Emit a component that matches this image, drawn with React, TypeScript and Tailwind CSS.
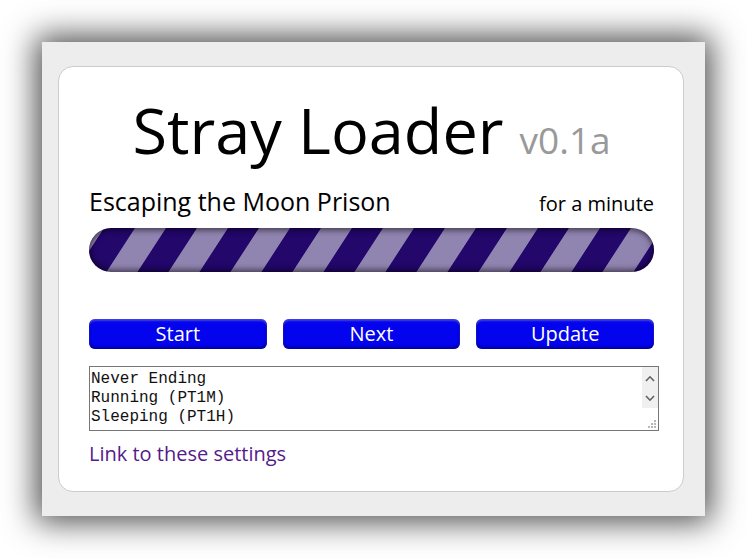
import React from "react";

const ChevronUp = () => (
  <svg width="10" height="7" viewBox="0 0 10 7" fill="none">
    <path d="M1 6L5 1.8L9 6" stroke="#606060" strokeWidth="1.6" />
  </svg>
);

const ChevronDown = () => (
  <svg width="10" height="7" viewBox="0 0 10 7" fill="none">
    <path d="M1 1L5 5.2L9 1" stroke="#606060" strokeWidth="1.6" />
  </svg>
);

const Grip = () => (
  <svg width="9" height="9" viewBox="0 0 9 9" fill="#b8b8b8">
    <rect x="6" y="0" width="2" height="2" />
    <rect x="3" y="3" width="2" height="2" />
    <rect x="6" y="3" width="2" height="2" />
    <rect x="0" y="6" width="2" height="2" />
    <rect x="3" y="6" width="2" height="2" />
    <rect x="6" y="6" width="2" height="2" />
  </svg>
);

// barber-pole stripes, ~62px apart, leaning right
const Stripes = () => (
  <svg className="block w-full h-full" preserveAspectRatio="none">
    <defs>
      <pattern
        id="pole"
        x="46"
        y="0"
        width="62"
        height="44"
        patternUnits="userSpaceOnUse"
        patternTransform="skewX(-33)"
      >
        <rect x="0" y="0" width="62" height="44" fill="#23076b" />
        <rect x="0" y="0" width="31" height="44" fill="#9084b0" />
      </pattern>
    </defs>
    <rect x="0" y="0" width="100%" height="100%" fill="url(#pole)" />
  </svg>
);

const App = () => {
  const buttons = ["Start", "Next", "Update"];

  return (
    <div className="min-h-screen bg-white flex justify-center pt-[42px] font-['Open_Sans',sans-serif]">
      <div className="w-[663px] h-[474px] bg-[#ededed] shadow-[0_0_30px_6px_rgba(0,0,0,0.7)] pl-[16px] pt-[24px]">
        <div className="w-[626px] h-[426px] rounded-[15px] border border-[#cccccc] bg-white pl-[30px] pr-[29px] pt-[30px]">
          {/* title */}
          <div className="flex items-baseline justify-center h-[66px] leading-[66px] whitespace-nowrap">
            <span className="text-[63px] text-black">Stray Loader</span>
            <span className="text-[37px] text-[#999999] ml-[16px]">v0.1a</span>
          </div>

          {/* status */}
          <div className="flex items-baseline justify-between mt-[22px] h-[32px] leading-[32px]">
            <span className="text-[25px] text-black">Escaping the Moon Prison</span>
            <span className="text-[20px] text-black">for a minute</span>
          </div>

          <div className="relative mt-[11px] h-[44px] rounded-full overflow-hidden">
            <Stripes />
            <div className="absolute inset-0 rounded-full shadow-[inset_0_3px_4px_rgba(0,0,0,0.3),inset_0_-3px_4px_rgba(0,0,0,0.3),inset_0_0_8px_rgba(0,0,0,0.35)]" />
          </div>

          {/* controls */}
          <div className="grid grid-cols-3 gap-4 mt-[47px]">
            {buttons.map((b) => (
              <button
                key={b}
                className="h-[30px] rounded-[6px] bg-[#0303ee] text-white text-[20px] leading-[30px] shadow-[inset_0_2px_2px_rgba(255,255,255,0.25),inset_0_-2px_3px_rgba(0,0,70,0.45),inset_0_0_3px_rgba(0,0,90,0.4)]"
              >
                {b}
              </button>
            ))}
          </div>

          <div className="mt-[17px] w-[570px] h-[65px] border border-[#767676] flex bg-white">
            <div className="flex-1 pl-[1px] pt-[3px] font-['Liberation_Mono',monospace] text-[16px] leading-[19px] text-[#111111] whitespace-pre">
              <div>Never Ending</div>
              <div>Running (PT1M)</div>
              <div>Sleeping (PT1H)</div>
            </div>
            <div className="w-[16px] flex flex-col">
              <div className="h-[41px] bg-[#f0f0f0] flex flex-col items-center justify-around pt-[1px]">
                <ChevronUp />
                <ChevronDown />
              </div>
              <div className="flex-1 flex items-end justify-end pr-[1px] pb-[1px]">
                <Grip />
              </div>
            </div>
          </div>

          <div className="mt-[9px] h-[28px] leading-[28px]">
            <a href="#" className="text-[20px] text-[#551a8b]">Link to these settings</a>
          </div>
        </div>
      </div>
    </div>
  );
};

export default App;
